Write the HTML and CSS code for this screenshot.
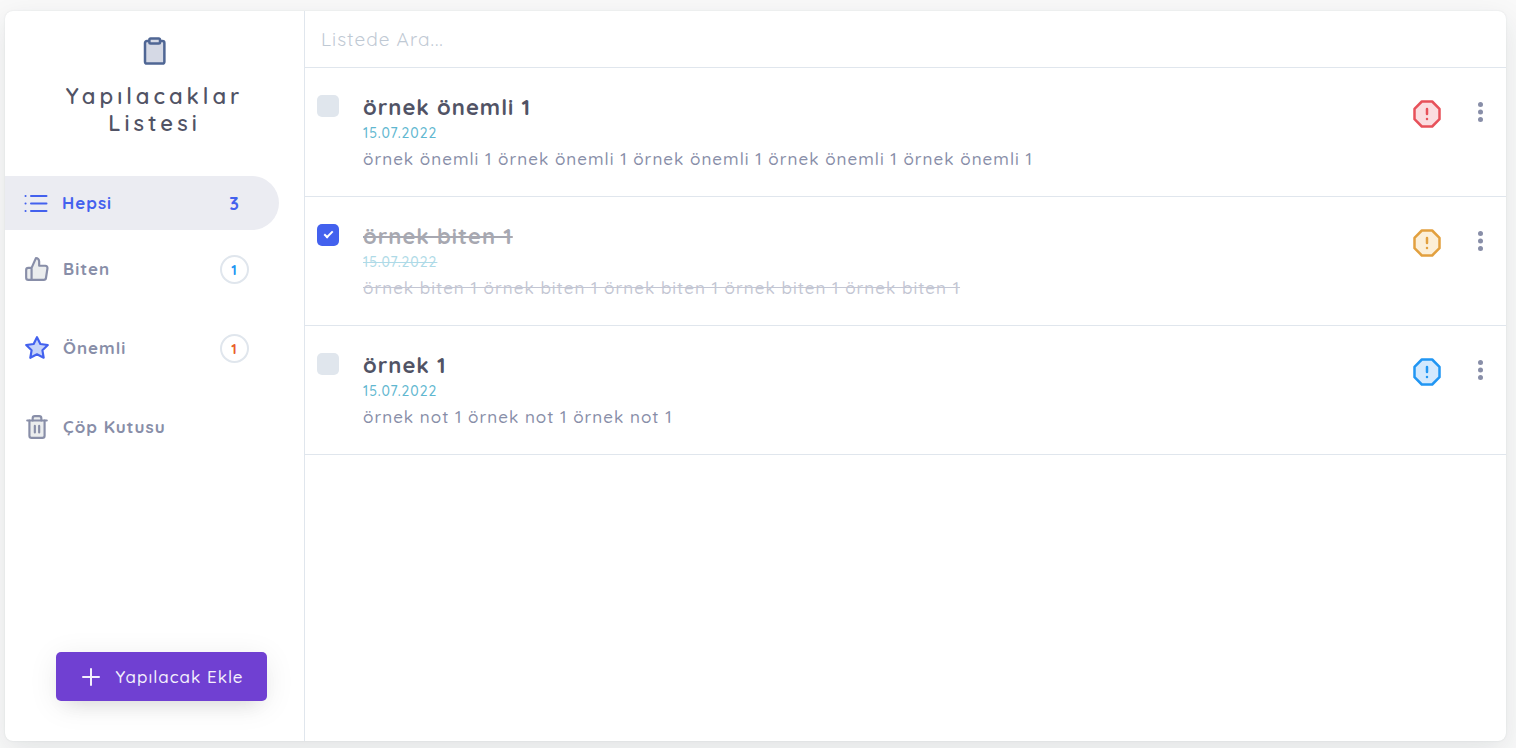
FILE: index.html
```
<!DOCTYPE html>
<html lang="tr">
<head>
  <meta charset="UTF-8">
  <meta name="viewport" content="width=device-width, initial-scale=1.0">
  <title>Yapılacaklar Listesi</title>
  <link rel="stylesheet" href="styles.css">
</head>
<body>

  <div class="todo-app">

    <!-- Sol menü -->
    <aside class="sidebar">
      <div class="brand">
        <svg class="brand-icon" viewBox="0 0 24 24"><path d="M16 4h2a1.500 1.500 0 0 1 1.500 1.500v15a1.500 1.500 0 0 1-1.500 1.500H5.500a1.500 1.500 0 0 1-1.500-1.500v-15A1.500 1.500 0 0 1 5.500 4H8"></path><rect x="7.500" y="2" width="8.500" height="4" rx="1"></rect></svg>
        <h1>Yapılacaklar Listesi</h1>
      </div>

      <nav class="menu">
        <a href="#" class="menu-item active">
          <svg class="menu-icon" viewBox="0 0 24 24"><path d="M7 5h15.500M7 12.500h15.500M7 20h15.500M1.500 5h.1M1.500 12.500h.1M1.500 20h.1"></path></svg>
          <span class="menu-name">Hepsi</span>
          <span class="total">3</span>
        </a>
        <a href="#" class="menu-item">
          <svg class="menu-icon" viewBox="0 0 24 24"><path d="M14 9V5a3 3 0 0 0-3-3l-4 9v11h11.280a2 2 0 0 0 2-1.700l1.380-9a2 2 0 0 0-2-2.300zM7 22H4a2 2 0 0 1-2-2v-7a2 2 0 0 1 2-2h3"></path></svg>
          <span class="menu-name">Biten</span>
          <span class="badge badge-blue">1</span>
        </a>
        <a href="#" class="menu-item">
          <svg class="menu-icon star" viewBox="0 0 24 24"><path d="M12 2l3.090 6.260L22 9.270l-5 4.870 1.180 6.880L12 17.770l-6.180 3.250L7 14.140 2 9.270l6.910-1.010z"></path></svg>
          <span class="menu-name">Önemli</span>
          <span class="badge badge-red">1</span>
        </a>
        <a href="#" class="menu-item">
          <svg class="menu-icon" viewBox="0 0 24 24"><path d="M19 6v14a2 2 0 0 1-2 2H7a2 2 0 0 1-2-2V6M8 6V4a2 2 0 0 1 2-2h4a2 2 0 0 1 2 2v2"></path><path d="M3 6h18M10 11v6M14 11v6"></path></svg>
          <span class="menu-name">Çöp Kutusu</span>
        </a>
      </nav>

      <button type="button" class="add-btn">
        <svg viewBox="0 0 24 24"><path d="M12 4v16M4 12h16"></path></svg>
        Yapılacak Ekle
      </button>
    </aside>

    <!-- Liste -->
    <main class="content">
      <input type="text" class="search" placeholder="Listede Ara..." aria-label="Listede Ara">

      <ul class="todo-list">
        <li class="todo">
          <input type="checkbox" class="check" id="todo1">
          <label class="todo-text" for="todo1">
            <span class="todo-title">örnek önemli 1</span>
            <span class="todo-date">15.07.2022</span>
            <span class="todo-note">örnek önemli 1 örnek önemli 1 örnek önemli 1 örnek önemli 1 örnek önemli 1</span>
          </label>
          <button type="button" class="priority danger" aria-label="Öncelik">
            <svg viewBox="0 0 24 24"><path d="M7.860 2h8.280L22 7.860v8.280L16.140 22H7.860L2 16.140V7.860z"></path><path d="M12 8v4M12 16h.01"></path></svg>
          </button>
          <button type="button" class="more" aria-label="Seçenekler">
            <svg viewBox="0 0 24 24"><circle cx="12.500" cy="4.500" r="2.500"></circle><circle cx="12.500" cy="12" r="2.500"></circle><circle cx="12.500" cy="19.500" r="2.500"></circle></svg>
          </button>
        </li>
        <li class="todo done">
          <input type="checkbox" class="check" id="todo2" checked>
          <label class="todo-text" for="todo2">
            <span class="todo-title">örnek biten 1</span>
            <span class="todo-date">15.07.2022</span>
            <span class="todo-note">örnek biten 1 örnek biten 1 örnek biten 1 örnek biten 1 örnek biten 1</span>
          </label>
          <button type="button" class="priority warning" aria-label="Öncelik">
            <svg viewBox="0 0 24 24"><path d="M7.860 2h8.280L22 7.860v8.280L16.140 22H7.860L2 16.140V7.860z"></path><path d="M12 8v4M12 16h.01"></path></svg>
          </button>
          <button type="button" class="more" aria-label="Seçenekler">
            <svg viewBox="0 0 24 24"><circle cx="12.500" cy="4.500" r="2.500"></circle><circle cx="12.500" cy="12" r="2.500"></circle><circle cx="12.500" cy="19.500" r="2.500"></circle></svg>
          </button>
        </li>
        <li class="todo">
          <input type="checkbox" class="check" id="todo3">
          <label class="todo-text" for="todo3">
            <span class="todo-title">örnek 1</span>
            <span class="todo-date">15.07.2022</span>
            <span class="todo-note">örnek not 1 örnek not 1 örnek not 1</span>
          </label>
          <button type="button" class="priority primary" aria-label="Öncelik">
            <svg viewBox="0 0 24 24"><path d="M7.860 2h8.280L22 7.860v8.280L16.140 22H7.860L2 16.140V7.860z"></path><path d="M12 8v4M12 16h.01"></path></svg>
          </button>
          <button type="button" class="more" aria-label="Seçenekler">
            <svg viewBox="0 0 24 24"><circle cx="12.500" cy="4.500" r="2.500"></circle><circle cx="12.500" cy="12" r="2.500"></circle><circle cx="12.500" cy="19.500" r="2.500"></circle></svg>
          </button>
        </li>
      </ul>
    </main>

  </div>

</body>
</html>
```
FILE: styles.css
```
* {
  box-sizing: border-box;
}

body {
  margin: 0;
  padding: 11px 10px 7px 5px;
  min-height: 100vh;
  display: flex;
  background-color: #f9f9f9;
  font-family: Quicksand, Lato, sans-serif;
  font-weight: 500;
  letter-spacing: 1px;
  color: #515365;
}

button, input {
  font-family: inherit;
  font-weight: inherit;
  letter-spacing: inherit;
}

button {
  border: none;
  background: none;
  padding: 0;
  cursor: pointer;
}

svg {
  fill: none;
  stroke: currentColor;
  stroke-width: 2;
  stroke-linecap: round;
  stroke-linejoin: round;
}

.todo-app {
  flex: 1;
  display: flex;
  background-color: #fff;
  border-radius: 8px;
  box-shadow: 0 10px 30px 0 rgba(31, 45, 61, 0.1), 0 0 2px 0 rgba(31, 45, 61, 0.1);
}

/* Sol menü */
.sidebar {
  width: 300px;
  flex-shrink: 0;
  display: flex;
  flex-direction: column;
  border-right: 1px solid #e0e6ed;
}

.brand {
  padding: 25px 48px 39px;
  text-align: center;
}

.brand-icon {
  display: block;
  width: 30px;
  height: 30px;
  margin: 0 auto 17px;
  color: #4f6694;
  fill: #d5d9e5;
}

.brand h1 {
  margin: 0;
  font-size: 22px;
  font-weight: 600;
  line-height: 27px;
  letter-spacing: 4px;
}

.menu {
  display: flex;
  flex-direction: column;
  gap: 25px;
}

.menu-item {
  display: flex;
  align-items: center;
  gap: 13px;
  height: 54px;
  margin-right: 25px;
  padding: 0 30px 0 19px;
  color: #888ea8;
  font-size: 17px;
  font-weight: 700;
  text-decoration: none;
}

.menu-item.active {
  gap: 14px;
  margin-bottom: -13px;
  background-color: #ebecf2;
  border-radius: 0 27px 27px 0;
  color: #4361ee;
}

.menu-icon {
  width: 26px;
  height: 26px;
  fill: #ebedee;
}

.menu-item.active .menu-icon {
  width: 24px;
  height: 24px;
}

.menu-icon.star {
  color: #4361ee;
  fill: #c6d3f9;
}

.menu-name {
  flex: 1;
  padding-bottom: 2px;
}

.total {
  width: 29px;
  font-size: 18px;
  text-align: center;
}

.badge {
  width: 29px;
  height: 29px;
  border: 2px solid #e0e6ed;
  border-radius: 50%;
  font-size: 14px;
  line-height: 27px;
  text-align: center;
}

.badge-blue {
  color: #2196f3;
}

.badge-red {
  color: #e95f2b;
}

.add-btn {
  display: flex;
  align-items: center;
  justify-content: center;
  gap: 12px;
  width: 211px;
  height: 49px;
  margin: auto 37px 40px auto;
  border-radius: 5px;
  background-color: #7040d2;
  box-shadow: 0 10px 20px -10px rgba(0, 0, 0, 0.12), 0 5px 30px 0 rgba(0, 0, 0, 0.08);
  color: #f4f0fc;
  font-size: 17px;
}

.add-btn svg {
  width: 24px;
  height: 24px;
}

/* Liste */
.content {
  flex: 1;
  min-width: 0;
}

.search {
  display: block;
  width: 100%;
  height: 57px;
  padding: 0 16px;
  border: none;
  border-bottom: 1px solid #e0e6ed;
  border-radius: 0 8px 0 0;
  background: none;
  outline: none;
  color: #515365;
  font-size: 19px;
  font-weight: 400;
}

.search::placeholder {
  color: #bfc9d4;
}

.todo-list {
  margin: 0;
  padding: 0;
  list-style: none;
}

.todo {
  display: flex;
  align-items: flex-start;
  padding: 26px 14px 24px 12px;
  border-bottom: 1px solid #e0e6ed;
}

.check {
  appearance: none;
  display: grid;
  place-items: center;
  width: 22px;
  height: 22px;
  margin: 1px 24px 0 0;
  border-radius: 5px;
  background-color: #e0e6ed;
  cursor: pointer;
}

.check:checked {
  background-color: #4361ee;
}

.check:checked::before {
  content: "";
  width: 3px;
  height: 7px;
  margin-bottom: 3px;
  border: solid #fff;
  border-width: 0 2px 2px 0;
  box-sizing: content-box;
  transform: rotate(45deg);
}

.todo-text {
  flex: 1;
  display: flex;
  flex-direction: column;
  align-items: flex-start;
  line-height: 26px;
}

.todo-title {
  font-size: 22px;
  font-weight: 700;
}

.todo-date {
  color: #5fb7d0;
  font-size: 14px;
}

.todo-note {
  color: #888ea8;
  font-size: 17px;
}

.done .todo-title,
.done .todo-date,
.done .todo-note {
  text-decoration: line-through;
  opacity: 0.5;
}

.priority,
.more {
  display: flex;
}

.priority {
  margin: 5px 26px 0 0;
}

.priority svg {
  width: 30px;
  height: 30px;
}

.danger {
  color: #e7515a;
}

.danger svg {
  fill: #fbdde0;
}

.warning {
  color: #e2a03f;
}

.warning svg {
  fill: #fcefd8;
}

.primary {
  color: #2196f3;
}

.primary svg {
  fill: #d3e9fe;
}

.more {
  margin-top: 6px;
  color: #888ea8;
}

.more svg {
  width: 24px;
  height: 24px;
  fill: currentColor;
  stroke: none;
}
```
